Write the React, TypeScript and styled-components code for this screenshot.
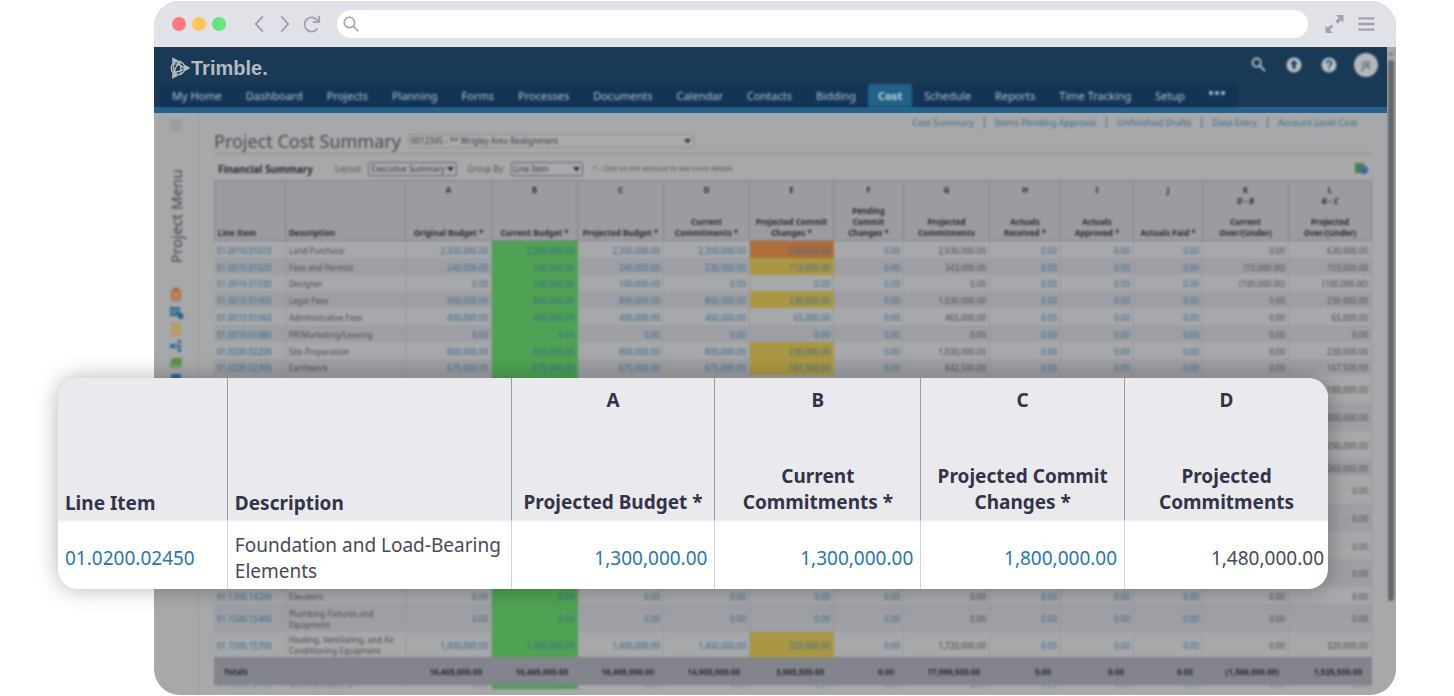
import React from "react";
import styled, { createGlobalStyle } from "styled-components";

const GlobalStyle = createGlobalStyle`
  *, *::before, *::after { box-sizing: border-box; }
  body { margin: 0; background: #fff; font-family: "Noto Sans", "Open Sans", sans-serif; }
  button, select, input { font: inherit; color: inherit; margin: 0; }
  button { border: 0; padding: 0; background: none; display: flex; align-items: center; justify-content: center; }
  a { color: inherit; text-decoration: none; }
  svg { display: block; }
`;

const Stage = styled.main`
  position: relative;
  padding: 1px 58px 1px 154px;
`;

/* ---------- browser frame ---------- */

const Browser = styled.section`
  border-radius: 26px;
  overflow: hidden;
  background: #a6a8aa;
`;

const Chrome = styled.div`
  height: 46px;
  display: flex;
  align-items: center;
  padding: 0 20px 0 18px;
  background: #e1e1e8;
  color: #a2a2b3;
`;

const Lights = styled.div`
  display: flex;
  gap: 6px;
  margin-right: 24px;
`;

const Light = styled.span<{ $color: string }>`
  width: 14px;
  height: 14px;
  border-radius: 50%;
  background: ${(p) => p.$color};
`;

const NavButtons = styled.div`
  display: flex;
  gap: 7px;
  margin-right: 16px;
`;

const ChromeButton = styled.button`
  width: 19px;
  height: 20px;
`;

const AddressBar = styled.label`
  flex: 1;
  height: 28px;
  display: flex;
  align-items: center;
  gap: 6px;
  padding: 0 14px 0 6px;
  border-radius: 14px;
  background: #fff;
`;

const AddressInput = styled.input`
  flex: 1;
  border: 0;
  outline: 0;
  background: transparent;
  font-size: 13px;
  color: #55556a;
`;

const WindowButtons = styled.div`
  display: flex;
  gap: 13px;
  margin-left: 17px;
`;

const Viewport = styled.div`
  display: flex;
`;

const Page = styled.div`
  flex: 1;
  min-width: 0;
`;

const Scrollbar = styled.div`
  width: 9px;
  padding: 5px 2px 0 1px;
  display: flex;
  flex-direction: column;
  align-items: center;
  gap: 5px;
  filter: blur(1px);
  color: #6b6c6f;
`;

const Thumb = styled.div`
  width: 6px;
  height: 541px;
  border-radius: 3px;
  background: #646568;
`;

/* ---------- application header ---------- */

const Header = styled.header`
  background: #193955;
  border-bottom: 6px solid #25618a;
`;

const Brand = styled.div`
  height: 37px;
  display: flex;
  justify-content: space-between;
  padding: 0 9px 0 16px;
`;

const Logo = styled.a`
  display: flex;
  align-items: center;
  height: 42px;
  color: #b4bac0;
  font: bold 20px/24px "Liberation Sans", Arial, sans-serif;
`;

const HeaderTools = styled.div`
  display: flex;
  align-items: center;
  gap: 16px;
  padding-bottom: 2px;
  color: #b9c1c8;
  filter: blur(1px);
`;

const Tool = styled.button`
  width: 19px;
  height: 35px;
`;

const Avatar = styled.button`
  width: 24px;
  height: 24px;
  border-radius: 50%;
  background: #b4b8bb;
  color: #3b4d5e;
  font-size: 10px;
`;

const Tabs = styled.nav`
  height: 23px;
  display: flex;
  align-items: stretch;
  padding-left: 6px;
  font-size: 11px;
  color: #b4c2ce;
  filter: blur(1px);
`;

const Tab = styled.a<{ $active?: boolean }>`
  display: flex;
  align-items: center;
  padding: 0 ${(p) => (p.$active ? 10 : 12)}px;
  border-radius: 3px 3px 0 0;
  background: ${(p) => (p.$active ? "#216288" : "#123557")};
  color: ${(p) => (p.$active ? "#c8d3db" : "inherit")};
  font-weight: ${(p) => (p.$active ? 700 : 400)};
  white-space: nowrap;
`;

/* ---------- page body ---------- */

const Body = styled.div`
  display: flex;
  filter: blur(1px);
`;

const Rail = styled.aside`
  width: 45px;
  border-right: 1px solid #9c9da1;
  display: flex;
  flex-direction: column;
  align-items: center;
  padding-top: 6px;
  color: #8a8b8e;
`;

const RailTitle = styled.span`
  writing-mode: vertical-rl;
  transform: rotate(180deg);
  margin: 40px 0 25px;
  height: 92px;
  font-size: 15px;
  line-height: 20px;
  white-space: nowrap;
  color: #45474b;
`;

const RailIcons = styled.div`
  display: flex;
  flex-direction: column;
  align-items: center;
  gap: 3px;
`;

const RailButton = styled.button`
  width: 14px;
  height: 14px;
`;

const Main = styled.div`
  flex: 1;
  min-width: 0;
  padding: 0 15px 6px 15px;
`;

const SubNav = styled.nav`
  height: 19px;
  display: flex;
  align-items: center;
  justify-content: flex-end;
  padding-right: 5px;
  font-size: 9px;
  color: #3c6b8b;
`;

const SubLink = styled.a`
  padding: 0 10px;
  line-height: 11px;
  & + & { border-left: 1px solid #4d6e86; }
`;

const TitleRow = styled.div`
  height: 22px;
  display: flex;
  align-items: center;
  gap: 7px;
  padding-bottom: 4px;
  border-bottom: 1px solid #8c8d91;
`;

const Title = styled.h1`
  margin: 0;
  font-size: 18px;
  line-height: 18px;
  font-weight: 400;
  color: #4a4c50;
`;

const FilterRow = styled.div`
  height: 26px;
  display: flex;
  align-items: center;
  padding: 3px 4px 0;
  font-size: 8px;
  color: #55575b;
`;

const SectionTitle = styled.h2`
  margin: 0 22px 0 0;
  font-size: 10px;
  line-height: 14px;
  font-weight: 700;
  color: #26282c;
`;

const Field = styled.label`
  display: flex;
  align-items: center;
  gap: 6px;
  margin-right: 10px;
`;

const Note = styled.span`
  font-size: 7px;
`;

const SelectBox = styled.span<{ $width: number }>`
  position: relative;
  display: block;
  width: ${(p) => p.$width}px;
`;

const Select = styled.select<{ $soft?: boolean }>`
  display: block;
  width: 100%;
  height: 14px;
  padding: 0 10px 0 2px;
  appearance: none;
  border: 1px solid ${(p) => (p.$soft ? "#8d8e92" : "#66686c")};
  border-radius: 2px;
  background: #a8aaac;
  color: #3c3e42;
  font-size: 8px;
  line-height: 12px;
`;

const Caret = styled.svg`
  position: absolute;
  right: 3px;
  top: 4px;
  pointer-events: none;
`;

const ExportButton = styled.button`
  margin-left: auto;
  width: 13px;
  height: 13px;
`;

/* ---------- cost table ---------- */

const Grid = styled.table`
  width: 100%;
  table-layout: fixed;
  border-collapse: separate;
  border-spacing: 0;
  font-size: 8px;
  line-height: 11px;
  color: #4b4d51;
`;

const Col = styled.col<{ $share: number }>`
  width: ${(p) => (p.$share / 1158) * 100}%;
`;

const HeadCell = styled.th`
  height: 61px;
  padding: 0;
  border: 1px solid #84858f;
  border-left-width: 0;
  background: #9b9ca1;
  color: #2b2d33;
  &:first-child { border-left-width: 1px; }
`;

const HeadStack = styled.div<{ $left?: boolean }>`
  height: 59px;
  padding: 3px 3px 2px;
  display: flex;
  flex-direction: column;
  justify-content: ${(p) => (p.$left ? "flex-end" : "space-between")};
  text-align: ${(p) => (p.$left ? "left" : "center")};
  white-space: pre-line;
`;

const Row = styled.tr<{ $alt: boolean; $height: number }>`
  height: ${(p) => p.$height}px;
  background: ${(p) => (p.$alt ? "#9d9fa4" : "#a6a8aa")};
`;

const TONES: Record<string, string> = {
  green: "#4fa254",
  orange: "#af6d3a",
  yellow: "#aa9744",
};

const Cell = styled.td<{ $tone?: string; $amount?: boolean; $link?: boolean }>`
  padding: 1px 3px 0;
  border-right: 1px solid ${(p) => (p.$tone ? TONES[p.$tone] : "#96979c")};
  background: ${(p) => (p.$tone ? TONES[p.$tone] : "transparent")};
  text-align: ${(p) => (p.$amount ? "right" : "left")};
  color: ${(p) => (p.$link ? "#3b6a8c" : "inherit")};
`;

const TotalRow = styled.tr`
  height: 28px;
  background: #82838b;
  color: #2a2c32;
  font-weight: 700;
`;

const TotalCell = styled.td`
  padding: 0 10px;
  text-align: right;
  &:first-child { text-align: left; }
`;

const Peek = styled.div`
  height: 3px;
  overflow: hidden;
  display: flex;
  flex-direction: column;
  justify-content: flex-end;
`;

/* ---------- magnified excerpt ---------- */

const Callout = styled.section`
  position: absolute;
  top: 378px;
  left: 58px;
  right: 126px;
  border-radius: 20px;
  box-shadow: 0 0 22px rgba(0, 0, 0, 0.3);
  background: #fff;
  overflow: hidden;
`;

const Excerpt = styled.table`
  width: 100%;
  table-layout: fixed;
  border-collapse: separate;
  border-spacing: 0;
  font-size: 19px;
  line-height: 26px;
  color: #474957;
`;

const ExcerptCol = styled.col<{ $share: number }>`
  width: ${(p) => (p.$share / 1271) * 100}%;
`;

const ExcerptHead = styled.th`
  padding: 0;
  background: #eaeaee;
  color: #33344a;
  font-weight: 700;
  border-right: 1px solid #9a9aaa;
  border-bottom: 2px solid #f3f3f7;
  &:last-child { border-right: 0; }
`;

const ExcerptStack = styled.div<{ $left?: boolean }>`
  height: 142px;
  padding: ${(p) => (p.$left ? "9px 7px 4px" : "9px 8px 5px")};
  display: flex;
  flex-direction: column;
  justify-content: ${(p) => (p.$left ? "flex-end" : "space-between")};
  text-align: ${(p) => (p.$left ? "left" : "center")};
  white-space: pre;
`;

const ExcerptCell = styled.td<{ $amount?: boolean; $link?: boolean }>`
  height: 67px;
  padding: 9px 7px 5px;
  border-right: 1px solid #d3d3dc;
  text-align: ${(p) => (p.$amount ? "right" : "left")};
  color: ${(p) => (p.$link ? "#2f74a6" : "inherit")};
  &:last-child { border-right: 0; padding-right: 4px; }
`;

/* ---------- data ---------- */

const TABS = [
  "My Home", "Dashboard", "Projects", "Planning", "Forms", "Processes", "Documents",
  "Calendar", "Contacts", "Bidding", "Cost", "Schedule", "Reports", "Time Tracking", "Setup",
];

const SUB_LINKS = ["Cost Summary", "Items Pending Approval", "Unfinished Drafts", "Data Entry", "Account Level Cost"];

type Column = { share: number; code?: string; label: string; left?: boolean };

const COLUMNS: Column[] = [
  { share: 72, label: "Line Item", left: true },
  { share: 120, label: "Description", left: true },
  { share: 86, code: "A", label: "Original Budget *" },
  { share: 86, code: "B", label: "Current Budget *" },
  { share: 86, code: "C", label: "Projected Budget *" },
  { share: 86, code: "D", label: "Current\nCommitments *" },
  { share: 84, code: "E", label: "Projected Commit\nChanges *" },
  { share: 70, code: "F", label: "Pending\nCommit\nChanges *" },
  { share: 86, code: "G", label: "Projected\nCommitments" },
  { share: 71, code: "H", label: "Actuals\nReceived *" },
  { share: 73, code: "I", label: "Actuals\nApproved *" },
  { share: 69, code: "J", label: "Actuals Paid *" },
  { share: 86, code: "K\nD - B", label: "Current\nOver/(Under)" },
  { share: 83, code: "L\nG - C", label: "Projected\nOver/(Under)" },
];

type Line = { h: number; cells: string[]; flag?: string };

const line = (id: string, text: string, a: string, b: string, c: string, d: string, e: string, g: string, k: string, l: string) =>
  [id, text, a, b, c, d, e, "0.00", g, "0.00", "0.00", "0.00", k, l];

const only = (l: string) => [...Array(13).fill(""), l];

const Z = "0.00";

const LINES: Line[] = [
  { h: 17, flag: "orange", cells: line("01.0010.01010", "Land Purchase", "2,300,000.00", "2,300,000.00", "2,300,000.00", "2,300,000.00", "630,000.00", "2,930,000.00", Z, "630,000.00") },
  { h: 17, flag: "yellow", cells: line("01.0010.01020", "Fees and Permits", "240,000.00", "240,000.00", "240,000.00", "230,000.00", "113,000.00", "343,000.00", "(10,000.00)", "103,000.00") },
  { h: 16, cells: line("01.0010.01030", "Designer", Z, "100,000.00", "100,000.00", Z, Z, Z, "(100,000.00)", "(100,000.00)") },
  { h: 17, flag: "yellow", cells: line("01.0010.01050", "Legal Fees", "900,000.00", "800,000.00", "800,000.00", "800,000.00", "230,000.00", "1,030,000.00", Z, "230,000.00") },
  { h: 17, cells: line("01.0010.01060", "Administrative Fees", "400,000.00", "400,000.00", "400,000.00", "400,000.00", "65,000.00", "465,000.00", Z, "65,000.00") },
  { h: 17, cells: line("01.0010.01080", "PR/Marketing/Leasing", Z, Z, Z, Z, Z, Z, Z, Z) },
  { h: 17, flag: "yellow", cells: line("01.0200.02200", "Site Preparation", "800,000.00", "800,000.00", "800,000.00", "800,000.00", "230,000.00", "1,030,000.00", Z, "230,000.00") },
  { h: 16, flag: "yellow", cells: line("01.0200.02300", "Earthwork", "675,000.00", "675,000.00", "675,000.00", "675,000.00", "167,500.00", "842,500.00", Z, "167,500.00") },
  { h: 28, cells: only("180,000.00") },
  { h: 28, cells: only("300,000.00") },
  { h: 28, cells: only("290,000.00") },
  { h: 17, cells: only("260,000.00") },
  { h: 28, cells: only(Z) },
  { h: 28, cells: only(Z) },
  { h: 27, cells: only(Z) },
  { h: 28, cells: only(Z) },
  { h: 17, cells: line("01.1300.14200", "Elevators", Z, Z, Z, Z, Z, Z, Z, Z) },
  { h: 28, cells: line("01.1500.15400", "Plumbing Fixtures and Equipment", Z, Z, Z, Z, Z, Z, Z, Z) },
  { h: 25, flag: "yellow", cells: line("01.1500.15700", "Heating, Ventilating, and Air Conditioning Equipment", "1,400,000.00", "1,400,000.00", "1,400,000.00", "1,400,000.00", "320,000.00", "1,720,000.00", Z, "320,000.00") },
];

const TOTALS = [
  "Totals", "", "16,465,000.00", "16,465,000.00", "16,465,000.00", "14,905,000.00", "3,085,500.00",
  Z, "17,990,500.00", Z, Z, Z, "(1,560,000.00)", "1,525,500.00",
];

const PEEK = line("01.1500.15750", "Communications", Z, Z, Z, Z, Z, Z, Z, Z);

const LINKED = [0, 2, 3, 4, 5, 6, 7, 9, 10, 11];

const EXCERPT: Column[] = [
  { share: 170, label: "Line Item", left: true },
  { share: 284, label: "Description", left: true },
  { share: 204, code: "A", label: "Projected Budget *" },
  { share: 206, code: "B", label: "Current\nCommitments *" },
  { share: 204, code: "C", label: "Projected Commit\nChanges *" },
  { share: 203, code: "D", label: "Projected\nCommitments" },
];

/* ---------- drawings ---------- */

const Stroke = ({ size, d, w = 2 }: { size: number; d: string; w?: number }) => (
  <svg width={size} height={size} viewBox="0 0 20 20" fill="none" stroke="currentColor" strokeWidth={w} strokeLinecap="round" strokeLinejoin="round" aria-hidden>
    <path d={d} />
  </svg>
);

const TrimbleMark = () => (
  <svg width="21" height="22" viewBox="0 0 21 22" fill="none" stroke="currentColor" strokeWidth="1.4" aria-hidden>
    <path d="M2.200 0.300L8 3.300L2.200 6Z M2.200 21.700L8 18.700L2.200 16Z M14.800 7.800L20.500 11L14.800 14.200Z" fill="currentColor" stroke="none" />
    <circle cx="8" cy="11" r="6.800" />
    <path d="M2.500 7c4-.5 9 1 12 4.500M2.500 15c4 .5 9-1 12-4.500M4.500 5c-2 4-1 9 2.500 12.500M7 4.400c3.500 3 5 8 3.500 12.800M11.500 5.200c-4 2-7 6-7 11" />
  </svg>
);

const Dropdown = ({ id, width, value, soft, label }: { id: string; width: number; value: string; soft?: boolean; label?: string }) => (
  <SelectBox $width={width}>
    <Select id={id} $soft={soft} defaultValue={value} aria-label={label}>
      <option>{value}</option>
    </Select>
    <Caret width="7" height="6" viewBox="0 0 7 6" aria-hidden>
      <path d="M0 1h7L3.500 5.500z" fill="#2c2e32" />
    </Caret>
  </SelectBox>
);

const RAIL: { name: string; art: React.ReactNode }[] = [
  { name: "Tasks", art: <><path d="M2 2h10v11H2z" fill="#b9764a" /><path d="M4 0h6v3H4z" fill="#a9643a" /><path d="M4 6h6M4 9h6" stroke="#a6a8aa" /></> },
  { name: "Calendar", art: <><path d="M1 2h10v9H1z" fill="#2f6a92" /><path d="M2 5h8M2 8h5" stroke="#a6a8aa" /><circle cx="12" cy="11" r="3" fill="#23608b" /></> },
  { name: "Notes", art: <><rect x="2" y="1" width="10" height="12" rx="1" fill="#b99a55" /><path d="M5 5h4v4H5z" fill="none" stroke="#a6a8aa" /></> },
  { name: "Workflow", art: <><path d="M3 7l8-4M3 7h8M3 7l8 4" stroke="#2f6a92" /><path d="M1 5h4v4H1zM9 1h3v3H9zM9 6h3v3H9zM9 10h3v3H9z" fill="#2f6a92" /></> },
  { name: "Budget", art: <><path d="M3 2h10l-1 7H1z" fill="#5b9248" /><path d="M1 10.500h9l2-1" fill="none" stroke="#5b9248" strokeWidth="1.500" /></> },
  { name: "Reports", art: <path d="M2 1h10v11H2z" fill="#2f6a92" /> },
];

/* ---------- app ---------- */

export default function App() {
  return (
    <Stage>
      <GlobalStyle />
      <Browser>
        <Chrome>
          <Lights>
            <Light $color="#ff7a80" />
            <Light $color="#ffc45c" />
            <Light $color="#62e57a" />
          </Lights>
          <NavButtons>
            <ChromeButton aria-label="Back"><Stroke size={20} d="M13 2.500L6 10l7 7.500" w={2} /></ChromeButton>
            <ChromeButton aria-label="Forward"><Stroke size={20} d="M6 2.500l7 7.500-7 7.500" w={2} /></ChromeButton>
            <ChromeButton aria-label="Reload"><Stroke size={20} d="M16 15.200A7.500 7.500 0 1 1 16.500 6.500M18 2v6h-6" w={2} /></ChromeButton>
          </NavButtons>
          <AddressBar>
            <Stroke size={16} d="M8 1.500a6.500 6.500 0 1 1 0 13a6.500 6.500 0 1 1 0-13M13 13l5.500 5.500" w={2} />
            <AddressInput aria-label="Address" />
          </AddressBar>
          <WindowButtons>
            <ChromeButton aria-label="Full screen">
              <svg width="19" height="20" viewBox="0 0 19 20" aria-hidden>
                <path d="M11 1h7.500v7.500l-2.300-2.300-3.600 3.500-2.400-2.400 3.500-3.500zM.5 19v-7.500l2.300 2.300 3.400-3.300 2 2L5 15.900 7.800 19z" fill="currentColor" />
              </svg>
            </ChromeButton>
            <ChromeButton aria-label="Menu"><Stroke size={20} d="M2.500 4h15M2.500 10h15M2.500 16h15" w={2.4} /></ChromeButton>
          </WindowButtons>
        </Chrome>

        <Viewport>
          <Page>
            <Header>
              <Brand>
                <Logo href="#home"><TrimbleMark />Trimble.</Logo>
                <HeaderTools>
                  <Tool aria-label="Search"><Stroke size={15} d="M7.500 2a5.500 5.500 0 1 1 0 11a5.500 5.500 0 1 1 0-11M12 12l6 6" w={2.4} /></Tool>
                  <Tool aria-label="Upload">
                    <svg width="16" height="16" viewBox="0 0 16 16" aria-hidden>
                      <circle cx="8" cy="8" r="7.500" fill="currentColor" />
                      <path d="M8 3l4 4H9.500v5h-3V7H4z" fill="#193955" />
                    </svg>
                  </Tool>
                  <Tool aria-label="Help">
                    <svg width="16" height="16" viewBox="0 0 16 16" aria-hidden>
                      <circle cx="8" cy="8" r="7.500" fill="currentColor" />
                      <path d="M5.500 6.200a2.500 2.300 0 1 1 3.700 2q-1.200.6-1.200 1.800M8 11.500v1.500" fill="none" stroke="#193955" strokeWidth="1.500" />
                    </svg>
                  </Tool>
                  <Avatar>JR</Avatar>
                </HeaderTools>
              </Brand>
              <Tabs>
                {TABS.map((t) => (
                  <Tab key={t} href="#tab" $active={t === "Cost"}>{t}</Tab>
                ))}
                <Tab href="#more" aria-label="More">
                  <svg width="16" height="10" viewBox="0 0 16 10" fill="currentColor" aria-hidden>
                    <circle cx="2" cy="2" r="2" /><circle cx="8" cy="2" r="2" /><circle cx="14" cy="2" r="2" />
                  </svg>
                </Tab>
              </Tabs>
            </Header>

            <Body>
              <Rail>
                <svg width="12" height="12" viewBox="0 0 12 12" stroke="currentColor" aria-hidden>
                  <path d="M0 1.500h12M0 4.500h12M0 7.500h12M0 10.500h12" />
                </svg>
                <RailTitle>Project Menu</RailTitle>
                <RailIcons>
                  {RAIL.map((r) => (
                    <RailButton key={r.name} aria-label={r.name}>
                      <svg width="14" height="14" viewBox="0 0 14 14" aria-hidden>{r.art}</svg>
                    </RailButton>
                  ))}
                </RailIcons>
              </Rail>

              <Main>
                <SubNav>
                  {SUB_LINKS.map((s) => (
                    <SubLink key={s} href="#sub">{s}</SubLink>
                  ))}
                </SubNav>
                <TitleRow>
                  <Title>Project Cost Summary</Title>
                  <Dropdown id="project" width={286} soft label="Project" value="0012345 - ** Wrigley Area Realignment" />
                </TitleRow>
                <FilterRow>
                  <SectionTitle>Financial Summary</SectionTitle>
                  <Field htmlFor="layout">Layout: <Dropdown id="layout" width={89} value="Executive Summary" /></Field>
                  <Field htmlFor="group">Group By: <Dropdown id="group" width={72} value="Line Item" /></Field>
                  <Note>* - Click on the amount to see more details</Note>
                  <ExportButton aria-label="Export">
                    <svg width="13" height="13" viewBox="0 0 13 13" aria-hidden>
                      <path d="M0 1h9v10H0z" fill="#4d8050" />
                      <circle cx="9" cy="8" r="4" fill="#3d6aa0" />
                    </svg>
                  </ExportButton>
                </FilterRow>
                <Grid>
                  <colgroup>
                    {COLUMNS.map((c) => <Col key={c.label + c.code} $share={c.share} />)}
                  </colgroup>
                  <thead>
                    <tr>
                      {COLUMNS.map((c) => (
                        <HeadCell key={c.label + c.code} scope="col">
                          <HeadStack $left={c.left}>
                            {c.code && <span>{c.code.split("\n")[0]}{c.code.includes("\n") && <><br /><i>{c.code.split("\n")[1]}</i></>}</span>}
                            <span>{c.label}</span>
                          </HeadStack>
                        </HeadCell>
                      ))}
                    </tr>
                  </thead>
                  <tbody>
                    {LINES.map((l, r) => (
                      <Row key={r} $alt={r % 2 === 1} $height={l.h}>
                        {l.cells.map((v, i) => (
                          <Cell key={i} $amount={i > 1} $link={LINKED.includes(i)} $tone={i === 3 ? "green" : i === 6 ? l.flag : undefined}>
                            {v}
                          </Cell>
                        ))}
                      </Row>
                    ))}
                    <TotalRow>
                      {TOTALS.map((v, i) => <TotalCell key={i}>{v}</TotalCell>)}
                    </TotalRow>
                    <Row $alt={false} $height={4}>
                      {PEEK.map((v, i) => (
                        <Cell key={i} $amount={i > 1} $link={LINKED.includes(i)} $tone={i === 3 ? "green" : undefined}>
                          <Peek>{v}</Peek>
                        </Cell>
                      ))}
                    </Row>
                  </tbody>
                </Grid>
              </Main>
            </Body>
          </Page>
          <Scrollbar>
            <svg width="6" height="3" viewBox="0 0 6 3" aria-hidden><path d="M0 3L3 0l3 3z" fill="currentColor" /></svg>
            <Thumb />
          </Scrollbar>
        </Viewport>
      </Browser>

      <Callout>
        <Excerpt>
          <colgroup>
            {EXCERPT.map((c) => <ExcerptCol key={c.label} $share={c.share} />)}
          </colgroup>
          <thead>
            <tr>
              {EXCERPT.map((c) => (
                <ExcerptHead key={c.label} scope="col">
                  <ExcerptStack $left={c.left}>
                    {c.code && <span>{c.code}</span>}
                    <span>{c.label}</span>
                  </ExcerptStack>
                </ExcerptHead>
              ))}
            </tr>
          </thead>
          <tbody>
            <tr>
              <ExcerptCell $link>01.0200.02450</ExcerptCell>
              <ExcerptCell>Foundation and Load-Bearing Elements</ExcerptCell>
              <ExcerptCell $amount $link>1,300,000.00</ExcerptCell>
              <ExcerptCell $amount $link>1,300,000.00</ExcerptCell>
              <ExcerptCell $amount $link>1,800,000.00</ExcerptCell>
              <ExcerptCell $amount>1,480,000.00</ExcerptCell>
            </tr>
          </tbody>
        </Excerpt>
      </Callout>
    </Stage>
  );
}
